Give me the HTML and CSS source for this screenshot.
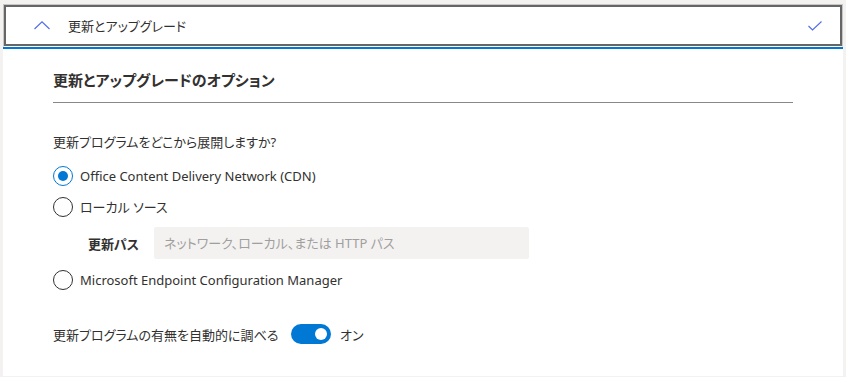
FILE: index.html
```html
<!DOCTYPE html>
<html lang="ja">
<head>
  <meta charset="UTF-8" />
  <meta name="viewport" content="width=device-width, initial-scale=1.0" />
  <title>更新とアップグレード</title>
  <link rel="stylesheet" href="styles.css">
</head>
<body>
  <div class="card">
    <div class="panel-head">
      <div class="panel-head-inner">
        <svg class="chevron" width="16" height="9" viewBox="0 0 16 9">
          <polyline points="0.5,8 8,0.8 15.5,8" fill="none" stroke="#4f6bed" stroke-width="1.1" />
        </svg>
        <span class="panel-title">更新とアップグレード</span>
        <svg class="check" width="14" height="10" viewBox="0 0 14 10">
          <polyline points="0.5,5 4.5,9 13.5,0.5" fill="none" stroke="#4f6bed" stroke-width="1.1" />
        </svg>
      </div>
    </div>

    <div class="section">
      <h2 class="section-title">更新とアップグレードのオプション</h2>

      <div class="question">更新プログラムをどこから展開しますか?</div>

      <div class="radio-row">
        <span class="radio checked"></span>
        <span class="radio-label">Office Content Delivery Network (CDN)</span>
      </div>
      <div class="radio-row">
        <span class="radio"></span>
        <span class="radio-label">ローカル ソース</span>
      </div>
      <div class="path-row">
        <label class="path-label" for="path">更新パス</label>
        <input class="path-input" id="path" type="text" placeholder="ネットワーク、ローカル、または HTTP パス" disabled />
      </div>
      <div class="radio-row">
        <span class="radio"></span>
        <span class="radio-label">Microsoft Endpoint Configuration Manager</span>
      </div>

      <div class="toggle-row">
        <span class="toggle-label">更新プログラムの有無を自動的に調べる</span>
        <span class="toggle"><span class="knob"></span></span>
        <span class="toggle-state">オン</span>
      </div>
    </div>
  </div>
</body>
</html>
```

FILE: styles.css
```css
body {
  margin: 0;
  padding: 0;
  background: #f3f2f1;
  font-family: "Segoe UI", "Noto Sans", "Noto Sans CJK JP", sans-serif;
  font-feature-settings: "palt";
  font-size: 13px;
  color: #323130;
}
.card {
  margin: 4px 3px 0;
  height: 372px;
  background: #fff;
}
.panel-head {
  border: 1px solid #c8c6c4;
  border-bottom-color: #fff;
  box-shadow: 0 2px 0 #0078d4;
  margin-bottom: 2px;
}
.panel-head-inner {
  display: flex;
  align-items: center;
  height: 37px;
  border: 2px solid #666;
  padding: 0 18px 0 28px;
}
.chevron {
  margin-right: 18px;
  margin-top: -1px;
}
.panel-title {
  flex: 1;
  line-height: 20px;
}
.check {
  margin-top: 1px;
}
.section {
  padding: 0 50px;
}
.section-title {
  margin: 0;
  padding: 21px 0 12px;
  font-size: 15px;
  font-weight: 600;
  line-height: 20px;
  border-bottom: 1px solid #8a8886;
}
.question {
  margin-top: 29px;
  line-height: 20px;
}
.radio-row {
  display: flex;
  align-items: center;
  gap: 7px;
  height: 20px;
  margin-top: 11px;
}
.radio-row + .radio-row {
  margin-top: 11px;
}
.question + .radio-row {
  margin-top: 14px;
}
.radio {
  box-sizing: border-box;
  width: 20px;
  height: 20px;
  border: 1px solid #323130;
  border-radius: 50%;
  position: relative;
}
.radio.checked {
  border-color: #0078d4;
}
.radio.checked::after {
  content: "";
  position: absolute;
  left: 4px;
  top: 4px;
  width: 10px;
  height: 10px;
  border-radius: 50%;
  background: #0078d4;
}
.radio-label {
  line-height: 20px;
}
.path-row {
  display: flex;
  align-items: center;
  margin: 10px 0 0 35px;
}
.path-label {
  width: 66px;
  font-weight: 600;
}
.path-input {
  box-sizing: border-box;
  width: 375px;
  height: 32px;
  border: none;
  border-radius: 2px;
  background: #f3f2f1;
  padding: 0 10px;
  font-family: inherit;
  font-feature-settings: "palt";
  font-size: 13px;
}
.path-input::placeholder {
  color: #a19f9d;
}
.toggle-row {
  display: flex;
  align-items: center;
  margin-top: 34px;
  height: 20px;
}
.toggle-label {
  width: 238px;
}
.toggle {
  display: flex;
  align-items: center;
  justify-content: flex-end;
  box-sizing: border-box;
  width: 40px;
  height: 20px;
  padding: 0 4px;
  border-radius: 10px;
  background: #0078d4;
}
.knob {
  width: 12px;
  height: 12px;
  border-radius: 50%;
  background: #fff;
}
.toggle-state {
  margin-left: 9px;
}
```
